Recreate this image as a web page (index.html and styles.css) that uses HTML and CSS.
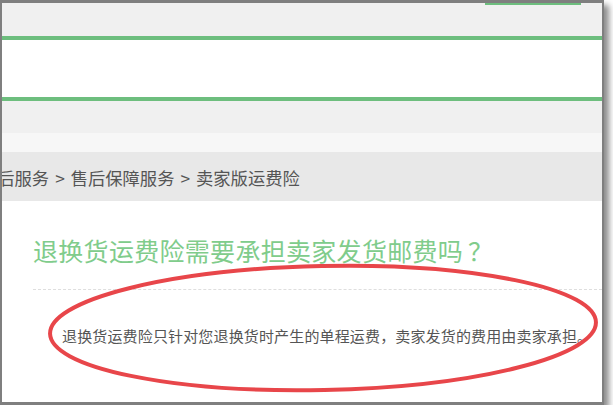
FILE: index.html
```html
<!DOCTYPE html>
<html lang="zh-CN">
<head>
    <meta charset="UTF-8">
    <meta name="viewport" content="width=device-width, initial-scale=1.0">
    <title>卖家版运费险</title>
    <link rel="stylesheet" href="styles.css">
</head>
<body>
    <div class="frame">
        <div class="topbar"><span class="topbar-tab"></span></div>
        <div class="nav"></div>
        <div class="subnav"></div>
        <div class="spacer"></div>
        <div class="crumbs">
            <span class="crumbs-text">售后服务<span class="sep">&gt;</span>售后保障服务<span class="sep">&gt;</span>卖家版运费险</span>
        </div>
        <div class="article">
            <h1 class="q-title">退换货运费险需要承担卖家发货邮费吗<span class="q-mark">？</span></h1>
            <p class="q-body">退换货运费险只针对您退换货时产生的单程运费，卖家发货的费用由卖家承担。</p>
        </div>

        <!-- 标注圈 -->
        <svg class="mark" width="600" height="399" viewBox="0 0 600 399">
            <ellipse cx="321" cy="325" rx="273" ry="62" transform="rotate(-1.2 321 325)"
                     fill="none" stroke="#e8464a" stroke-width="4"/>
        </svg>
    </div>
</body>
</html>
```

FILE: styles.css
```css
body {
    margin: 0;
    background-color: #fff;
    font-family: "Microsoft YaHei", "Noto Sans CJK SC", sans-serif;
}
.frame {
    position: relative;
    width: 600px;
    height: 399px;
    border-style: solid;
    border-color: #7f7f7f;
    border-width: 3px 2px 3px 2px;
    box-shadow: 5px 5px 6px rgba(0, 0, 0, 0.45);
    background: #fff;
    overflow: hidden;
}
.topbar {
    height: 33px;
    background-color: #f0f0f0;
    display: flex;
    justify-content: flex-end;
    align-items: flex-start;
}
.topbar-tab {
    width: 96px;
    height: 2px;
    margin-right: 21px;
    background-color: #6dbe7e;
}
.nav {
    height: 57px;
    background: #fff;
    border-top: 4px solid #6dbe7e;
    border-bottom: 4px solid #6dbe7e;
}
.subnav {
    height: 32px;
    background-color: #f0f0f0;
}
.spacer {
    height: 19px;
    background-color: #f7f7f7;
}
.crumbs {
    height: 49px;
    line-height: 52px;
    background-color: #e8e8e8;
    color: #555;
    font-size: 17.3px;
    white-space: nowrap;
    overflow: hidden;
}
.crumbs-text {
    display: inline-block;
    margin-left: -22px;
}
.sep {
    padding: 0 6px;
}
.article {
    padding-top: 34px;
}
.q-title {
    margin: 0 0 0 31px;
    padding-bottom: 24px;
    font-size: 25px;
    line-height: 30px;
    letter-spacing: 0.3px;
    font-weight: normal;
    color: #80cc8b;
    border-bottom: 1px dashed #dedede;
    white-space: nowrap;
}
.q-mark {
    margin-left: 5px;
}
.q-body {
    margin: 36px 0 0 60px;
    font-size: 15px;
    line-height: 20px;
    letter-spacing: 0.15px;
    color: #555;
    white-space: nowrap;
}
.mark {
    position: absolute;
    left: 0;
    top: 0;
    pointer-events: none;
}
```
